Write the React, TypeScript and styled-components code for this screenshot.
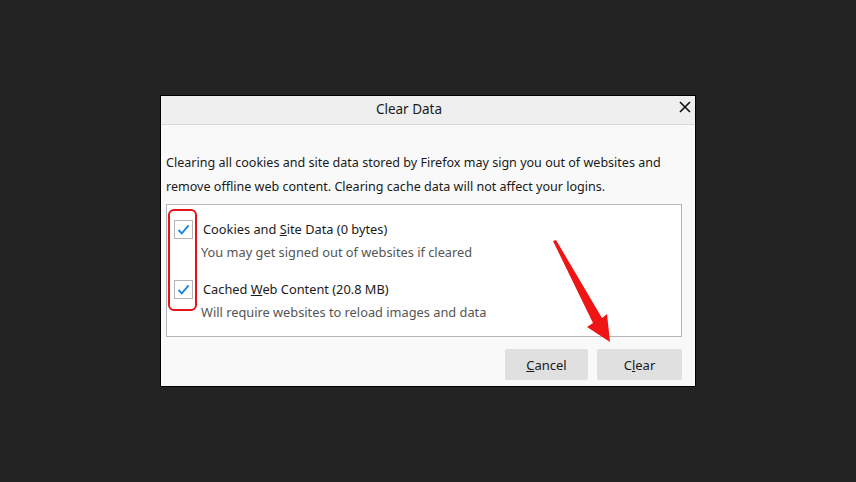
import styled, { createGlobalStyle } from "styled-components";

const GlobalStyle = createGlobalStyle`
  html, body {
    margin: 0;
    padding: 0;
    background: #232323;
  }
  body {
    font-family: "Noto Sans", "Open Sans", sans-serif;
  }
`;

const Page = styled.div`
  position: relative;
  width: 856px;
  height: 482px;
  padding: 95px 0 0 160px;
  box-sizing: border-box;
  overflow: hidden;
`;

const Dialog = styled.div`
  width: 536px;
  height: 292px;
  box-sizing: border-box;
  border: 1px solid #000;
  background: #f9f9f9;
  display: flex;
  flex-direction: column;
`;

const TitleBar = styled.div`
  position: relative;
  height: 29px;
  box-sizing: border-box;
  padding: 0 38px 3px 0;
  background: #efefef;
  border-bottom: 1px solid #d9d9d9;
  display: flex;
  align-items: center;
  justify-content: center;
  font-size: 13.5px;
  color: #1a1a1a;
`;

const Close = styled.span`
  position: absolute;
  right: 3px;
  top: 4px;
  width: 14px;
  height: 14px;
  display: flex;
`;

const Body = styled.div`
  padding: 26px 13px 0 5px;
  display: flex;
  flex-direction: column;
`;

const Intro = styled.p`
  margin: 0;
  font-size: 12.55px;
  line-height: 24px;
  color: #1a1a1a;
`;

const ListBox = styled.div`
  margin-top: 5px;
  height: 133px;
  box-sizing: border-box;
  background: #fff;
  border: 1px solid #b7b7b7;
  padding: 15px 0 0 7px;
  display: flex;
  flex-direction: column;
`;

const Item = styled.div`
  display: grid;
  grid-template-columns: 20px 1fr;
  column-gap: 9px;
  margin-bottom: ${(p: { $gap: number }) => p.$gap}px;
`;

const Box = styled.span`
  width: 19px;
  height: 19px;
  box-sizing: border-box;
  border: 1px solid #b5b5b5;
  background: #fff;
  display: flex;
  align-items: center;
  justify-content: center;
`;

const Label = styled.span`
  font-size: 12.8px;
  line-height: 19px;
  color: #1a1a1a;
`;

const Hint = styled.span`
  grid-column: 2;
  margin-left: -2px;
  margin-top: 4px;
  font-size: 12.8px;
  line-height: 18px;
  color: #555;
`;

const Footer = styled.div`
  display: flex;
  justify-content: flex-end;
  gap: 9px;
  padding-top: 12px;
`;

const Button = styled.button`
  width: ${(p: { $w: number }) => p.$w}px;
  height: 31px;
  border: none;
  border-radius: 2px;
  background: #e0e0e0;
  font-family: inherit;
  font-size: 13px;
  color: #1a1a1a;
  padding: 0;
`;

const Highlight = styled.div`
  position: absolute;
  left: 168px;
  top: 209px;
  width: 29px;
  height: 102px;
  box-sizing: border-box;
  border: 2px solid #e3131b;
  border-radius: 6px;
`;

const Overlay = styled.svg`
  position: absolute;
  left: 0;
  top: 0;
`;

const Check = () => (
  <svg width="13" height="11" viewBox="0 0 13 11">
    <path d="M1.5 6 L4.8 9.4 L11.6 1.4" fill="none" stroke="#1d84d9" strokeWidth="1.8" />
  </svg>
);

export default function App() {
  return (
    <>
      <GlobalStyle />
      <Page>
        <Dialog>
          <TitleBar>
            Clear Data
            <Close>
              <svg width="14" height="14" viewBox="0 0 14 14">
                <path d="M2 2 L12 12 M12 2 L2 12" stroke="#111" strokeWidth="1.6" />
              </svg>
            </Close>
          </TitleBar>
          <Body>
            <Intro>
              Clearing all cookies and site data stored by Firefox may sign you out of websites and
              <br />
              remove offline web content. Clearing cache data will not affect your logins.
            </Intro>
            <ListBox>
              <Item $gap={19}>
                <Box>
                  <Check />
                </Box>
                <Label>
                  Cookies and <u>S</u>ite Data (0 bytes)
                </Label>
                <Hint>You may get signed out of websites if cleared</Hint>
              </Item>
              <Item $gap={0}>
                <Box>
                  <Check />
                </Box>
                <Label>
                  Cached <u>W</u>eb Content (20.8 MB)
                </Label>
                <Hint>Will require websites to reload images and data</Hint>
              </Item>
            </ListBox>
            <Footer>
              <Button $w={83}>
                <u>C</u>ancel
              </Button>
              <Button $w={85}>
                C<u>l</u>ear
              </Button>
            </Footer>
          </Body>
        </Dialog>
        <Highlight />
        <Overlay width="856" height="482">
          <polygon
            points="553,241 556,240 602,318 607,314 610,342 587,327 593,323"
            fill="#f01515"
          />
        </Overlay>
      </Page>
    </>
  );
}
